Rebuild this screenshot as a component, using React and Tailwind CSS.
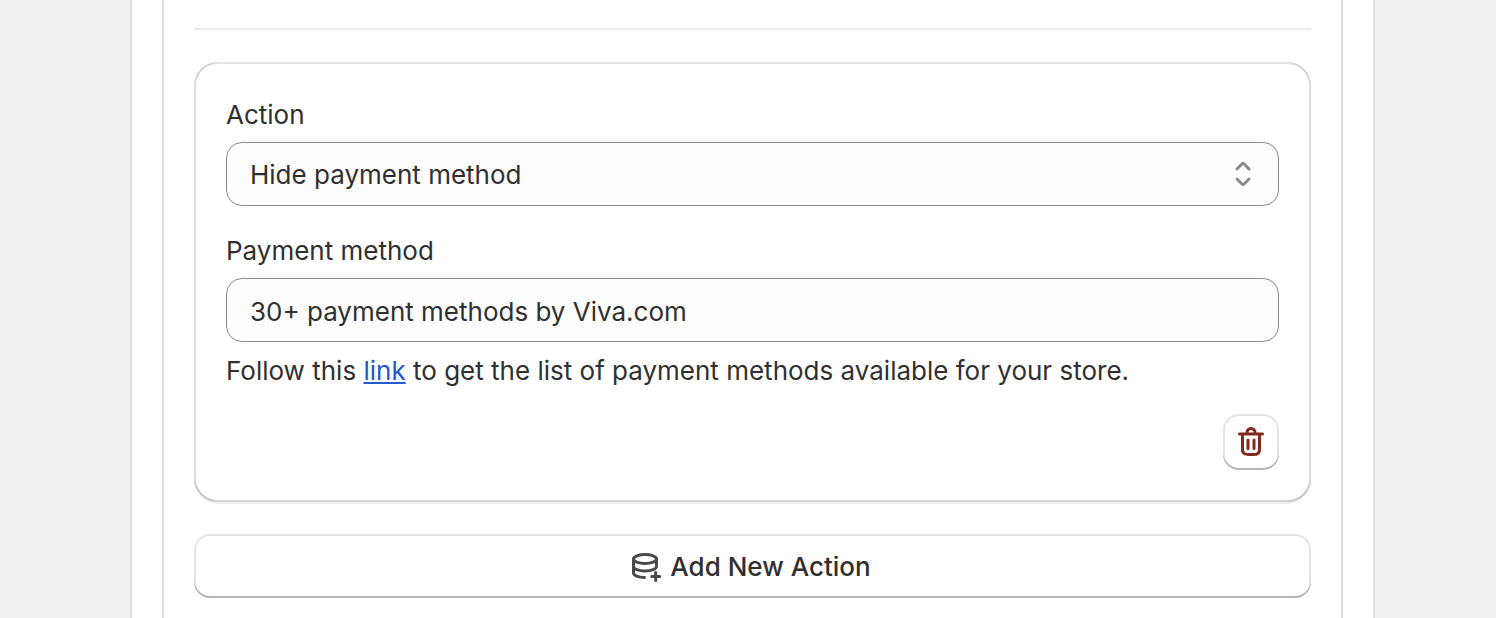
import React, { useState } from 'react';

const SelectIcon = ({ className }) => (
  <svg viewBox="0 0 20 20" fill="currentColor" aria-hidden="true" className={className}>
    <path d="M10.884 4.323a1.25 1.25 0 0 0-1.768 0l-2.646 2.647a.75.75 0 0 0 1.06 1.06l2.47-2.47 2.47 2.47a.75.75 0 1 0 1.06-1.06l-2.646-2.647Z" />
    <path d="m13.53 13.03-2.646 2.647a1.25 1.25 0 0 1-1.768 0l-2.646-2.647a.75.75 0 0 1 1.06-1.06l2.47 2.47 2.47-2.47a.75.75 0 0 1 1.06 1.06Z" />
  </svg>
);

const DeleteIcon = ({ className }) => (
  <svg viewBox="0 0 20 20" fill="currentColor" aria-hidden="true" className={className}>
    <path d="M11.5 8.25a.75.75 0 0 1 .75.75v4.25a.75.75 0 0 1-1.5 0v-4.25a.75.75 0 0 1 .75-.75Z" />
    <path d="M9.25 9a.75.75 0 0 0-1.5 0v4.25a.75.75 0 0 0 1.5 0v-4.25Z" />
    <path
      fillRule="evenodd"
      d="M7.25 5.25a2.75 2.75 0 0 1 5.5 0h3a.75.75 0 0 1 0 1.5h-.75v5.45c0 1.68 0 2.52-.327 3.162a3 3 0 0 1-1.311 1.311c-.642.327-1.482.327-3.162.327h-.4c-1.68 0-2.52 0-3.162-.327a3 3 0 0 1-1.311-1.311c-.327-.642-.327-1.482-.327-3.162v-5.45h-.75a.75.75 0 0 1 0-1.5h3Zm1.5 0a1.25 1.25 0 1 1 2.5 0h-2.5Zm-2.25 1.5h7v5.45c0 .865-.001 1.423-.036 1.848-.033.408-.09.559-.128.633a1.5 1.5 0 0 1-.655.655c-.074.038-.225.095-.633.128-.425.035-.983.036-1.848.036h-.4c-.865 0-1.423-.001-1.848-.036-.408-.033-.559-.09-.633-.128a1.5 1.5 0 0 1-.656-.655c-.037-.074-.094-.225-.127-.633-.035-.425-.036-.983-.036-1.848v-5.45Z"
    />
  </svg>
);

const DatabaseAddIcon = ({ className }) => (
  <svg
    viewBox="0 0 40 40"
    fill="none"
    stroke="currentColor"
    strokeWidth="3"
    strokeLinecap="round"
    aria-hidden="true"
    className={className}
  >
    <ellipse cx="19" cy="12" rx="11.5" ry="4.5" />
    <path d="M7.5 12v7.5c0 2.5 5 4.5 11.5 4.5s11.5-2 11.5-4.5V12" />
    <path d="M7.5 19v7c0 2.3 4.5 4.3 11 4.5" />
    <path d="M29.7 25.5v8M25.7 29.5h8" />
  </svg>
);

const App = () => {
  const [action, setAction] = useState('hide');
  const [method, setMethod] = useState('30+ payment methods by Viva.com');

  return (
    <div className="min-h-screen flex bg-[#f0f0f0] pl-[130px] pr-[121px] font-['Inter',sans-serif] text-[26px] leading-[38px] font-normal text-[#303030]">
      <main className="flex-1 flex border-x-2 border-[#dedede] bg-white px-[30px]">
        <section className="flex-1 border-x-2 border-[#dedede] px-[30px] pt-7 pb-5">
          <hr className="border-t-2 border-[#ebebeb]" />

          <div className="mt-8 flex flex-col gap-6 rounded-3xl p-8 shadow-[inset_2px_0_0_0_#00000021,inset_-2px_0_0_0_#00000021,inset_0_-2px_0_0_#0000002b,inset_0_2px_0_0_#cccccc80,0_2px_0_0_#1a1a1a12]">
            <div className="flex flex-col gap-2">
              <label htmlFor="action" className="pt-0.5">Action</label>
              <div className="relative">
                <select
                  id="action"
                  value={action}
                  onChange={(e) => setAction(e.target.value)}
                  className="block w-full h-16 appearance-none rounded-2xl border border-[#8a8a8a] bg-[#fdfdfd] pt-0.5 pl-[23px] pr-16"
                >
                  <option value="hide">Hide payment method</option>
                </select>
                <SelectIcon className="pointer-events-none absolute right-4 top-3 size-10 text-[#8a8a8a]" />
              </div>
            </div>

            <div className="flex flex-col gap-2">
              <label htmlFor="method" className="pt-0.5">Payment method</label>
              <input
                id="method"
                type="text"
                value={method}
                onChange={(e) => setMethod(e.target.value)}
                className="w-full h-16 rounded-2xl border border-[#8a8a8a] bg-[#fdfdfd] pt-0.5 px-[23px]"
              />
              <p className="pt-0.5">
                Follow this{' '}
                <a href="#methods" className="text-[#2459cf] underline">
                  link
                </a>{' '}
                to get the list of payment methods available for your store.
              </p>
            </div>

            <div className="flex justify-end">
              <button
                type="button"
                aria-label="Delete action"
                className="size-14 flex items-center justify-center rounded-2xl text-[#84281a] shadow-[inset_0_-2px_0_0_#b5b5b5,inset_0_0_0_2px_#0000001a]"
              >
                <DeleteIcon className="size-10" />
              </button>
            </div>
          </div>

          <button
            type="button"
            className="mt-8 w-full h-16 flex items-center justify-center gap-1 rounded-2xl pt-0.5 font-medium shadow-[inset_0_-2px_0_0_#b5b5b5,inset_0_0_0_2px_#0000001a]"
          >
            <DatabaseAddIcon className="-ml-2 size-10 text-[#4a4a4a]" />
            Add New Action
          </button>
        </section>
      </main>
    </div>
  );
};

export default App;
